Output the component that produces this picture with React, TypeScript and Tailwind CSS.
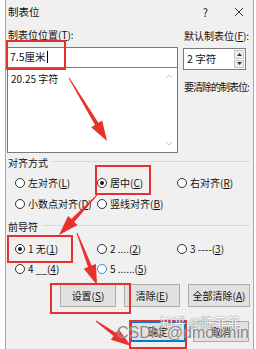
import React from "react";

function arrowPath(sx: number, sy: number, tx: number, ty: number, w0 = 1, w1 = 4, hl = 20, hw = 6.5) {
  const dx = tx - sx;
  const dy = ty - sy;
  const len = Math.hypot(dx, dy);
  const ux = dx / len;
  const uy = dy / len;
  const px = -uy;
  const py = ux;
  const bx = tx - ux * hl;
  const by = ty - uy * hl;
  const pts = [
    [sx + (px * w0) / 2, sy + (py * w0) / 2],
    [bx + (px * w1) / 2, by + (py * w1) / 2],
    [bx + px * hw, by + py * hw],
    [tx, ty],
    [bx - px * hw, by - py * hw],
    [bx - (px * w1) / 2, by - (py * w1) / 2],
    [sx - (px * w0) / 2, sy - (py * w0) / 2],
  ];
  return "M" + pts.map((p) => p[0].toFixed(1) + " " + p[1].toFixed(1)).join(" L") + " Z";
}

function Radio({ checked, blue, children }: { checked?: boolean; blue?: boolean; children: React.ReactNode }) {
  return (
    <div className="flex items-center gap-[3px] h-full">
      <span
        className={
          blue
            ? "w-[10px] h-[10px] rounded-full border border-[#3c8fd6] bg-white flex items-center justify-center shrink-0"
            : "w-[10px] h-[10px] rounded-full border border-[#333333] bg-white flex items-center justify-center shrink-0"
        }
      >
        {checked && <span className="w-[4px] h-[4px] rounded-full bg-[#1a1a1a]" />}
      </span>
      <span className="whitespace-nowrap">{children}</span>
    </div>
  );
}

function Btn({ children, w, primary }: { children: React.ReactNode; w: string; primary?: boolean }) {
  return (
    <div
      className={
        primary
          ? `${w} h-full bg-[#e1e1e1] border border-[#0078d7] shadow-[inset_0_0_0_1px_#0078d7] flex items-center justify-center`
          : `${w} h-full bg-[#e1e1e1] border border-[#adadad] flex items-center justify-center`
      }
    >
      {children}
    </div>
  );
}

function GroupLabel({ children }: { children: React.ReactNode }) {
  return (
    <div className="flex items-center h-full pl-[2px] pr-[3px]">
      <span className="whitespace-nowrap">{children}</span>
      <div className="flex-1 h-px bg-[#dadada] ml-[4px] mt-[-3px]" />
    </div>
  );
}

export default function App() {
  return (
    <div className="w-[256px] h-[349px] relative overflow-hidden bg-white flex font-['Noto_Sans_CJK_SC','Noto_Sans',sans-serif] text-[10px] leading-none text-[#111]">
      <div className="w-[5px] shrink-0 bg-white" />
      <div className="w-[249px] shrink-0 border-l border-r border-[#a8a8a8] bg-[#f0f0f0] flex flex-col">
        {/* title bar */}
        <div className="h-[24px] flex items-center pl-[2px] relative">
          <span className="text-[10.5px]">制表位</span>
          <div className="flex-1" />
          <span className="text-[11px] text-[#222] mr-[26px]">?</span>
          <svg width="10" height="10" viewBox="0 0 10 10" className="mr-[9px]">
            <path d="M1 1 L9 9 M9 1 L1 9" stroke="#333" strokeWidth="1" />
          </svg>
        </div>

        {/* top section */}
        <div className="flex h-[129px]">
          <div className="w-[172px] shrink-0 flex flex-col">
            <div className="h-[22px] flex items-center pl-[2px]">
              制表位位置(<u>T</u>):
            </div>
            <div className="mt-[1px] ml-[1px] w-[171px] h-[21px] bg-white border border-[#7a7a7a] flex items-center pl-[2px]">
              <span className="text-[10.5px]">7.5厘米</span>
              <span className="w-px h-[12px] bg-black ml-[1px]" />
            </div>
            <div className="ml-[1px] w-[171px] h-[86px] bg-white border border-t-0 border-[#7a7a7a] flex">
              <div className="flex-1 pl-[3px] pt-[6px]">20.25 字符</div>
              <div className="w-[17px] flex flex-col items-center justify-between py-[6px]">
                <svg width="8" height="5" viewBox="0 0 8 5">
                  <path d="M1 4 L4 1 L7 4" stroke="#c4c4c4" strokeWidth="1" fill="none" />
                </svg>
                <svg width="8" height="5" viewBox="0 0 8 5">
                  <path d="M1 1 L4 4 L7 1" stroke="#c4c4c4" strokeWidth="1" fill="none" />
                </svg>
              </div>
            </div>
          </div>
          <div className="flex-1 min-w-0 pl-[5px] flex flex-col">
            <div className="h-[24px] flex items-center pl-[1px] whitespace-nowrap">
              默认制表位(<u>F</u>):
            </div>
            <div className="w-[63px] h-[22px] bg-white border border-[#7a7a7a] flex items-center">
              <span className="flex-1 pl-[3px] text-[10.5px]">2 字符</span>
              <div className="w-[10px] h-full flex flex-col mr-px py-px gap-px">
                <div className="flex-1 bg-[#ededed] border border-[#c8c8c8] flex items-center justify-center">
                  <svg width="5" height="3" viewBox="0 0 5 3"><path d="M0 3 L2.5 0 L5 3 Z" fill="#333" /></svg>
                </div>
                <div className="flex-1 bg-[#ededed] border border-[#c8c8c8] flex items-center justify-center">
                  <svg width="5" height="3" viewBox="0 0 5 3"><path d="M0 0 L2.5 3 L5 0 Z" fill="#333" /></svg>
                </div>
              </div>
            </div>
            <div className="h-[30px] flex items-center pl-[1px] mt-[2px] whitespace-nowrap tracking-[-1px]">要清除的制表位:</div>
          </div>
        </div>

        {/* alignment */}
        <div className="h-[19px]">
          <GroupLabel>对齐方式</GroupLabel>
        </div>
        <div className="pl-[9px]">
          <div className="grid grid-cols-[82px_80px_1fr] h-[21px]">
            <Radio>左对齐(<u>L</u>)</Radio>
            <Radio checked>居中(<u>C</u>)</Radio>
            <Radio>右对齐(<u>R</u>)</Radio>
          </div>
          <div className="grid grid-cols-[82px_80px_1fr] h-[21px]">
            <Radio>小数点对齐(<u>D</u>)</Radio>
            <Radio>竖线对齐(<u>B</u>)</Radio>
          </div>
        </div>

        {/* leader */}
        <div className="h-[25px]">
          <GroupLabel>前导符</GroupLabel>
        </div>
        <div className="pl-[9px]">
          <div className="grid grid-cols-[82px_80px_1fr] h-[20px]">
            <Radio checked>1 无(<u>1</u>)</Radio>
            <Radio>2 ....(<u>2</u>)</Radio>
            <Radio>3 ----(<u>3</u>)</Radio>
          </div>
          <div className="grid grid-cols-[82px_80px_1fr] h-[20px]">
            <Radio>4 __(<u>4</u>)</Radio>
            <Radio blue>5 ......(<u>5</u>)</Radio>
          </div>
        </div>

        {/* buttons */}
        <div className="mt-[5px] h-[23px] flex pl-[54px] gap-[8px]">
          <Btn w="w-[56px]">设置(<u>S</u>)</Btn>
          <Btn w="w-[56px]">清除(<u>E</u>)</Btn>
          <Btn w="w-[62px]">全部清除(<u>A</u>)</Btn>
        </div>
        <div className="mt-[14px] h-[21px] flex pl-[124px] gap-[7px]">
          <Btn w="w-[56px]" primary>确定</Btn>
          <Btn w="w-[56px]">取消</Btn>
        </div>
      </div>
      <div className="flex-1 bg-white" />

      {/* annotations */}
      <div className="absolute left-[6px] top-[40px] w-[60px] h-[30px] border-2 border-[#e53030]" />
      <div className="absolute left-[95px] top-[165px] w-[56px] h-[30px] border-2 border-[#e53030]" />
      <div className="absolute left-[7px] top-[235px] w-[66px] h-[28px] border-2 border-[#e53030]" />
      <div className="absolute left-[50px] top-[283px] w-[81px] h-[31px] border-2 border-[#e53030]" />
      <div className="absolute left-[129px] top-[320px] w-[58px] h-[29px] border-2 border-[#e53030]" />

      <svg className="absolute inset-0 pointer-events-none" width="256" height="349" viewBox="0 0 256 349">
        <path d={arrowPath(69, 78, 107, 141)} fill="#e8322c" />
        <path d={arrowPath(97, 195, 59, 235)} fill="#e8322c" />
        <path d={arrowPath(77, 233, 97, 285)} fill="#e8322c" />
        <path d={arrowPath(96, 321, 131, 346)} fill="#e8322c" />
      </svg>

      {/* watermarks */}
      <div className="absolute left-[160px] top-[315px] text-[13px] leading-none text-white [text-shadow:0_0_1px_#777,0_0_1px_#777] opacity-90 whitespace-nowrap">
        知乎 @陈菲菲
      </div>
      <div className="absolute left-[117px] top-[325px] font-['Liberation_Sans',sans-serif] text-[16px] leading-none text-[#7d7d7d] [text-shadow:0_0_1px_#fff] opacity-90 whitespace-nowrap">
        CSDN @dmoumin
      </div>
    </div>
  );
}
